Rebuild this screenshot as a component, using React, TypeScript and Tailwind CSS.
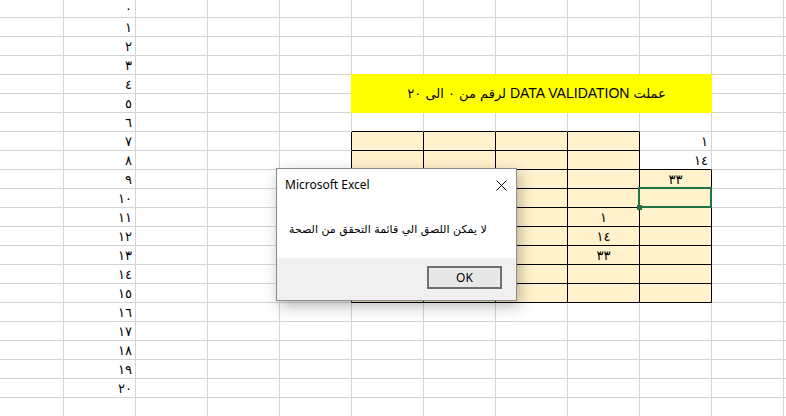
import React from 'react';

const DIGITS = '٠١٢٣٤٥٦٧٨٩';
const ar = (n: number) => String(n).replace(/\d/g, (d) => DIGITS[Number(d)]);

const ROWS = 22;
const COLS = 12;

const inTable = (r: number, c: number) =>
  (r >= 7 && r <= 15 && c >= 5 && c <= 8) || (r >= 9 && r <= 15 && c === 9);
const inYellow = (r: number, c: number) => r >= 4 && r <= 5 && c >= 5 && c <= 9;

type CellText = { text: string; align: 'right' | 'center' };

const cellContent = (r: number, c: number): CellText | null => {
  if (c === 1 && r <= 20) return { text: ar(r), align: 'right' };
  if (c === 9 && r === 7) return { text: '١', align: 'right' };
  if (c === 9 && r === 8) return { text: '١٤', align: 'right' };
  if (c === 9 && r === 9) return { text: '٣٣', align: 'center' };
  if (c === 8 && r === 11) return { text: '١', align: 'center' };
  if (c === 8 && r === 12) return { text: '١٤', align: 'center' };
  if (c === 8 && r === 13) return { text: '٣٣', align: 'center' };
  return null;
};

function Sheet() {
  const cells: React.ReactNode[] = [];
  for (let r = 0; r < ROWS; r++) {
    for (let c = 0; c < COLS; c++) {
      if (inYellow(r, c)) {
        if (r === 4 && c === 5) {
          cells.push(
            <div
              key={`y-${r}-${c}`}
              className="col-span-5 row-span-2 -ml-px -mt-px relative z-[1] bg-[#ffff00] flex items-center justify-center font-['Liberation_Sans','DejaVu_Sans',sans-serif] text-[14px] text-black"
            >
              <span dir="rtl" className="pl-[10px]">
                <span className="font-['DejaVu_Sans',sans-serif] text-[13px]">عملت</span> DATA VALIDATION{' '}
                <span className="font-['DejaVu_Sans',sans-serif] text-[13px]">لرقم من ٠ الى ٢٠</span>
              </span>
            </div>
          );
        }
        continue;
      }
      const rb = inTable(r, c) || inTable(r, c + 1);
      const bb = inTable(r, c) || inTable(r + 1, c);
      const rightCls = c === COLS - 1 ? '' : rb ? 'border-r border-r-black' : 'border-r border-r-[#d4d4d4]';
      const bottomCls = r === ROWS - 1 ? '' : bb ? 'border-b border-b-black' : 'border-b border-b-[#d4d4d4]';
      const fillCls = inTable(r, c) ? 'bg-[#fff2cc]' : 'bg-white';
      const content = cellContent(r, c);
      const selected = r === 10 && c === 9;
      cells.push(
        <div
          key={`${r}-${c}`}
          className={`${rightCls} ${bottomCls} ${fillCls} ${selected ? 'relative' : ''} flex items-center min-w-0 overflow-visible`}
        >
          {content && (
            <span
              className={`w-full leading-none font-['DejaVu_Sans',sans-serif] text-[13px] text-black ${
                content.align === 'right' ? 'text-right pr-[3px]' : 'text-center'
              }`}
            >
              {content.text}
            </span>
          )}
          {selected && (
            <>
              <div className="absolute -left-[2px] -top-[2px] -right-[1px] -bottom-[1px] border-2 border-[#217346]" />
              <div className="absolute -left-[3px] top-[16px] w-[5px] h-[5px] bg-[#217346]" />
            </>
          )}
        </div>
      );
    }
  }
  return (
    <div className="grid w-[786px] h-[416px] grid-cols-[64px_repeat(10,72px)_1fr] grid-rows-[18px_repeat(20,19px)_1fr]">
      {cells}
    </div>
  );
}

function Dialog() {
  return (
    <div className="absolute left-[276px] top-[168px] w-[241px] h-[133px] border border-[#8a8a8a] bg-white flex flex-col shadow-[3px_5px_14px_rgba(0,0,0,0.28)] font-['Noto_Sans','DejaVu_Sans',sans-serif] text-[12px] text-black">
      <div className="h-[32px] flex items-center justify-between pl-[8px] pr-[9px]">
        <span className="leading-none">Microsoft Excel</span>
        <svg width="11" height="11" viewBox="0 0 11 11" className="block">
          <path d="M0.5 0.5 L10.5 10.5 M10.5 0.5 L0.5 10.5" stroke="#000" strokeWidth="1" fill="none" />
        </svg>
      </div>
      <div className="flex-1 flex items-center pl-[12px]">
        <span className="font-['DejaVu_Sans',sans-serif] text-[11px] leading-none">لا يمكن اللصق الي قائمة التحقق من الصحة</span>
      </div>
      <div className="h-[42px] bg-[#f0f0f0] flex items-start justify-end pt-[8px] pr-[14px]">
        <div className="w-[75px] h-[23px] border-2 border-[#707070] bg-[#e8e8e8] flex items-center justify-center text-[12px] leading-none">
          OK
        </div>
      </div>
    </div>
  );
}

export default function App() {
  return (
    <div className="relative w-[786px] h-[416px] overflow-hidden bg-white">
      <Sheet />
      <Dialog />
    </div>
  );
}
